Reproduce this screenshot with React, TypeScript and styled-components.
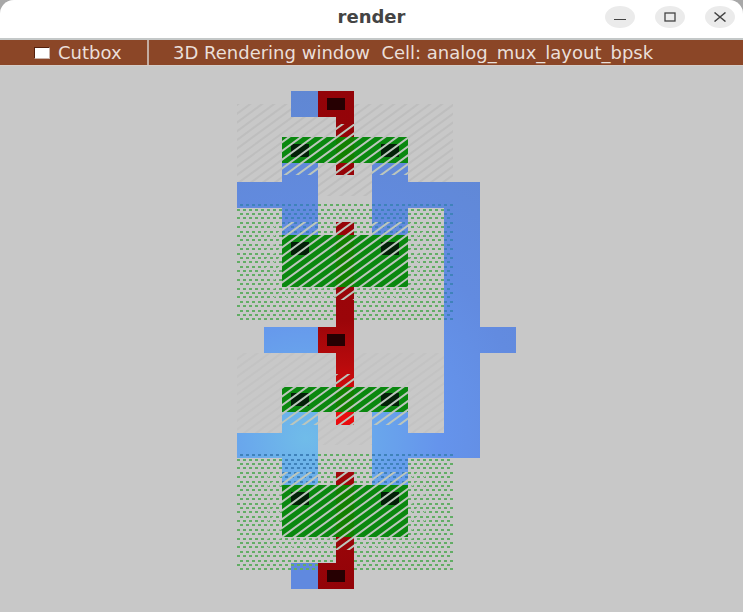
import React from "react";
import styled, { createGlobalStyle } from "styled-components";

const GlobalStyle = createGlobalStyle`
  * { box-sizing: border-box; }
  body { margin: 0; background: #a8a8a8; }
`;

const Window = styled.main`
  display: flex;
  flex-direction: column;
  min-height: 100vh;
  overflow: hidden;
  border-radius: 14px 14px 0 0;
  background: #c8c8c8;
  font-family: "DejaVu Sans", sans-serif;
`;

const TitleBar = styled.header`
  display: grid;
  grid-template-columns: 1fr auto 1fr;
  align-items: center;
  height: 40px;
  padding: 0 8px 4px;
  background: #ffffff;
  border-bottom: 2px solid #c4c8c8;
`;

const Title = styled.h1`
  grid-column: 2;
  margin: 0;
  font-size: 18px;
  line-height: 24px;
  font-weight: 700;
  color: #444444;
`;

const WindowButtons = styled.div`
  display: flex;
  justify-content: flex-end;
  gap: 20px;
`;

const WindowButton = styled.button`
  display: grid;
  place-items: center;
  width: 30px;
  height: 22px;
  padding: 0;
  border: 0;
  border-radius: 50%;
  background: #ebebeb;
`;

const Toolbar = styled.div`
  display: flex;
  align-items: stretch;
  height: 26px;
  background: #8b4627;
  border-bottom: 1px solid #d5cdc9;
  color: #eadfd9;
  font-size: 18px;
  line-height: 26px;
  white-space: nowrap;
`;

const CutboxLabel = styled.label`
  display: flex;
  align-items: center;
  gap: 8px;
  width: 149px;
  padding-left: 34px;
  border-right: 2px solid #c3aca2;
`;

const Checkbox = styled.input`
  appearance: none;
  width: 16px;
  height: 12px;
  margin: 0;
  border: 1px solid;
  border-color: #55200c #c9b3aa #c9b3aa #55200c;
  background: #ffffff;
  &:checked { background: #333333; }
`;

const CellInfo = styled.div`
  padding-left: 24px;
  white-space: pre;
`;

const Drawing = styled.svg`
  display: block;
  width: 100%;
  height: auto;
`;

type Rect = [x: number, y: number, width: number, height: number];

const metal: Rect[] = [
  [291, 91, 27, 26],
  [264, 327, 54, 26],
];

const metalPaths = [
  "M282 163H318V235H282V208H237V182H282Z",
  "M372 163H408V182H480V327H516V353H480V458H408V485H372V412H408V433H444V208H408V235H372Z",
  "M282 412H318V485H282V458H237V433H282Z",
];

const poly: Rect[] = [
  [318, 91, 36, 26],
  [336, 117, 18, 58],
  [336, 222, 18, 203],
  [318, 327, 18, 26],
  [336, 472, 18, 91],
  [318, 563, 36, 26],
];

const diffusion: Rect[] = [
  [282, 137, 126, 26],
  [282, 235, 126, 52],
  [282, 387, 126, 25],
  [282, 485, 126, 52],
];

const polyContacts: Rect[] = [
  [327, 98, 18, 12],
  [327, 334, 18, 12],
  [327, 570, 18, 12],
];

const diffusionContacts: Rect[] = [144, 242, 393, 492].flatMap((y) => [
  [291, y, 18, 13] as Rect,
  [381, y, 18, 13] as Rect,
]);

const deviceHatch: Rect[] = [
  [282, 137, 126, 26], [336, 124, 18, 51], [282, 163, 36, 12], [372, 163, 36, 12],
  [282, 222, 36, 13], [372, 222, 36, 13], [282, 235, 126, 52], [336, 222, 18, 13], [336, 287, 18, 13],
  [282, 387, 126, 25], [336, 374, 18, 13], [336, 412, 18, 13], [282, 412, 36, 13], [372, 412, 36, 13],
  [282, 472, 36, 13], [372, 472, 36, 13], [282, 485, 126, 52], [336, 472, 18, 13], [336, 537, 18, 13],
];

const wellHatch: Rect[] = [222, 472].flatMap((y) => [
  [264, y, 18, 78] as Rect,
  [282, y + 65, 54, 13] as Rect,
  [354, y + 65, 54, 13] as Rect,
  [408, y, 18, 78] as Rect,
]);

const Rects = ({ items, fill }: { items: Rect[]; fill: string }) => (
  <g fill={fill}>
    {items.map(([x, y, w, h]) => (
      <rect key={`${x}-${y}`} x={x} y={y} width={w} height={h} />
    ))}
  </g>
);

/* Diagonal lines across the whole layout, shown only inside the given rectangles. */
const hatchPath = Array.from({ length: 76 }, (_, i) => {
  const right = 232 + i * 12;
  return `M${right} 91L${right - 684} 591`;
}).join("");

const Hatch = ({ id, items, color, width }: { id: string; items: Rect[]; color: string; width: number }) => (
  <g>
    <clipPath id={id}>
      {items.map(([x, y, w, h]) => (
        <rect key={`${x}-${y}`} x={x} y={y} width={w} height={h} />
      ))}
    </clipPath>
    <path clipPath={`url(#${id})`} d={hatchPath} stroke={color} strokeWidth={width} />
  </g>
);

const wellDots = (top: number) =>
  Array.from({ length: 27 }, (_, row) => {
    const y = Math.round(top + row * 4.385);
    const start = row % 2 === 0 ? 240 : 237;
    return Array.from({ length: 36 }, (_, col) => `M${start + col * 6} ${y}h3v2h-3z`).join("");
  }).join("");

const LayoutDrawing = () => (
  <Drawing viewBox="0 66 743 546" role="img" aria-label="Layout of cell analog_mux_layout_bpsk">
    <defs>
      <radialGradient id="metal" gradientUnits="userSpaceOnUse" cx="306" cy="438" r="350">
        <stop offset="0" stopColor="#70bce9" />
        <stop offset="0.16" stopColor="#6aaaec" />
        <stop offset="0.38" stopColor="#6594ec" />
        <stop offset="0.62" stopColor="#628be0" />
        <stop offset="1" stopColor="#6087d3" />
      </radialGradient>
      <linearGradient id="poly" gradientUnits="userSpaceOnUse" x1="0" y1="91" x2="0" y2="589">
        <stop offset="0" stopColor="#930308" />
        <stop offset="0.46" stopColor="#9b0509" />
        <stop offset="0.55" stopColor="#b80a0c" />
        <stop offset="0.66" stopColor="#ee0b0e" />
        <stop offset="0.77" stopColor="#a0070a" />
        <stop offset="1" stopColor="#930308" />
      </linearGradient>
    </defs>

    <Hatch id="implant" items={[[237, 104, 216, 92]]} color="#bebebe" width={2} />
    <Hatch id="faintImplant" items={[[237, 353, 216, 92]]} color="#c3c3c3" width={2} />

    <Rects items={metal} fill="url(#metal)" />
    <Rects items={[[291, 563, 27, 26]]} fill="#6089df" />
    <g fill="url(#metal)">
      {metalPaths.map((d) => <path key={d} d={d} />)}
    </g>

    <path fill="#62ad65" shapeRendering="crispEdges" d={wellDots(204.3) + wellDots(454.3)} />
    <clipPath id="metalArea">
      {metalPaths.map((d) => <path key={d} d={d} />)}
    </clipPath>
    <g clipPath="url(#metalArea)">
      <path fill="#3f82ba" shapeRendering="crispEdges" d={wellDots(204.3) + wellDots(454.3)} />
    </g>
    <Hatch id="well" items={wellHatch} color="#c5c8c5" width={1} />

    <Rects items={poly} fill="url(#poly)" />
    <Rects items={diffusion} fill="#0a880f" />
    <Rects
      items={diffusion.map(([, y, , h]) => [336, y, 18, h] as Rect)}
      fill="#128000"
    />
    <Rects items={polyContacts} fill="#260002" />
    <Rects items={diffusionContacts} fill="#032008" />
    <Hatch id="device" items={deviceHatch} color="#bcc6bc" width={2} />
  </Drawing>
);

export default function App() {
  return (
    <>
      <GlobalStyle />
      <Window>
        <TitleBar>
          <Title>render</Title>
          <WindowButtons>
            <WindowButton type="button" aria-label="Minimize">
              <svg width="12" height="12" viewBox="0 0 12 12"><path d="M0 8.5H12" stroke="#444" strokeWidth="1.2" /></svg>
            </WindowButton>
            <WindowButton type="button" aria-label="Maximize">
              <svg width="12" height="10" viewBox="0 0 12 10"><rect x="1" y="1" width="10" height="8" fill="none" stroke="#444" strokeWidth="1.3" /></svg>
            </WindowButton>
            <WindowButton type="button" aria-label="Close">
              <svg width="12" height="10" viewBox="0 0 12 10"><path d="M0.5 0.5L11.5 9.5M11.5 0.5L0.5 9.5" stroke="#444" strokeWidth="1.5" /></svg>
            </WindowButton>
          </WindowButtons>
        </TitleBar>
        <Toolbar>
          <CutboxLabel>
            <Checkbox type="checkbox" />
            Cutbox
          </CutboxLabel>
          <CellInfo>{"3D Rendering window  Cell: analog_mux_layout_bpsk"}</CellInfo>
        </Toolbar>
        <LayoutDrawing />
      </Window>
    </>
  );
}
